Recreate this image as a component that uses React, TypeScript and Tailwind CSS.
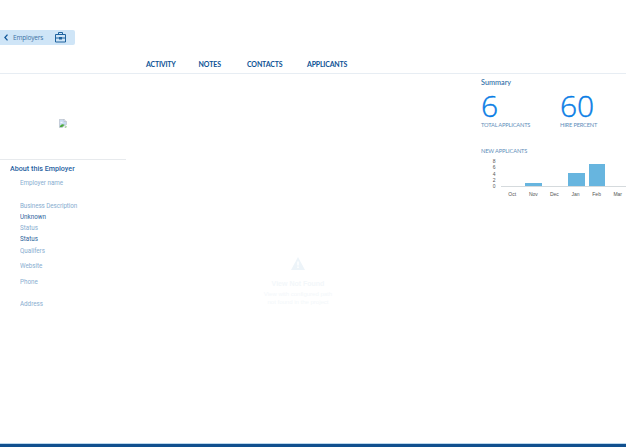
import React from "react";

const tabs = [
  { label: "ACTIVITY", cls: "w-[52.5px] tracking-[-0.2px]" },
  { label: "NOTES", cls: "w-[48.5px] tracking-[-0.1px]" },
  { label: "CONTACTS", cls: "w-[60px] tracking-[-0.15px]" },
  { label: "APPLICANTS", cls: "w-[60px] tracking-[-0.2px]" },
];

const fields = [
  { label: "Employer name", cls: "h-[22.5px] text-[#88add0]" },
  { label: "Business Description", cls: "h-[11px] tracking-[-0.08px] text-[#88add0]" },
  { label: "Unknown", cls: "h-[11.5px] text-[#2c649b]" },
  { label: "Status", cls: "h-[11px] text-[#88add0]" },
  { label: "Status", cls: "h-[11.5px] text-[#2c649b]" },
  { label: "Qualifers", cls: "h-[15.5px] text-[#88add0]" },
  { label: "Website", cls: "h-[15.5px] text-[#88add0]" },
  { label: "Phone", cls: "h-[22.5px] text-[#88add0]" },
  { label: "Address", cls: "h-[12px] text-[#88add0]" },
];

const months = [
  { label: "Oct", bar: "h-0" },
  { label: "Nov", bar: "h-[3px]" },
  { label: "Dec", bar: "h-0" },
  { label: "Jan", bar: "h-[13px]" },
  { label: "Feb", bar: "h-[22px]" },
  { label: "Mar", bar: "h-0" },
];

function Briefcase() {
  return (
    <svg className="h-[11px] w-[11px]" viewBox="0 0 11 11" fill="none" stroke="#1f639f" strokeWidth="1">
      <path d="M3.5 2.5v-2h4v2M.5 2.5h10v7.5H.5zM.5 6h10" />
      <path d="M4 5h3v2.5H4z" fill="#1f639f" stroke="none" />
    </svg>
  );
}

function MissingImage() {
  return (
    <svg className="ml-[59px] h-[9px] w-[8px]" viewBox="0 0 8 9">
      <path d="M.4.4h4.8l2.2 2.2v3L3.2 8.5H.4z" fill="#cbdcf3" stroke="#adb4be" strokeWidth=".6" />
      <path d="M5.2.4v2.2h2.2" fill="#fff" stroke="#9da4ad" strokeWidth=".5" />
      <path d="M1.5 2.8h2v1h-2z" fill="#fff" />
      <path d="M.8 7.8C1.5 5.2 3.4 4.6 5.7 5.8L3.2 8H.8z" fill="#4ba83c" />
      <path d="M5.4 8.6l2-1.8v1.8z" fill="#61af52" />
    </svg>
  );
}

function Metric({ value, label, width }: { value: string; label: string; width: string }) {
  return (
    <div className={width}>
      <div className="h-[30px] font-['Open_Sans',sans-serif] text-[30px] leading-[30px] font-light text-[#087de5] [-webkit-text-stroke:0.4px_#087de5]">{value}</div>
      <div className="h-[8px] text-[5.7px] leading-[8px] tracking-[-0.17px] text-[#5f8fba]">{label}</div>
    </div>
  );
}

function Chart() {
  return (
    <div className="mt-[3px] flex h-[40px]">
      <div className="w-[16.5px] text-right font-['Liberation_Sans',sans-serif] text-[5px] text-[#555]">
        {[8, 6, 4, 2, 0].map((n) => (
          <div key={n} className="h-[6.3px] leading-[6.3px]">{n}</div>
        ))}
      </div>
      <div className="ml-[5.5px] w-[128px] shrink-0">
        <div className="flex h-[29px] items-end border-b border-[#d5dadd] pl-[1px]">
          {months.map((m) => (
            <div key={m.label} className="flex w-[21.2px] shrink-0 justify-center">
              <div className={`bg-[#67b5df] ${m.label === "Feb" ? "w-[16px]" : "w-[17px]"} ${m.bar}`} />
            </div>
          ))}
        </div>
        <div className="flex pt-[4px] pl-[0.7px] font-['Liberation_Sans',sans-serif] text-[5px] leading-[7px] text-[#555]">
          {months.map((m) => (
            <div key={m.label} className="w-[21.1px] shrink-0 text-center">{m.label}</div>
          ))}
        </div>
      </div>
    </div>
  );
}

export default function App() {
  return (
    <div className="flex h-[447px] w-[626px] flex-col overflow-hidden bg-white font-[Lato,sans-serif] whitespace-nowrap">
      <header className="h-[74px] shrink-0 border-b border-[#e7edf3] pt-[30px]">
        <button className="flex h-[15px] w-[75px] items-center rounded-r-[2px] bg-[#cfe5f7]">
          <svg className="ml-[4px] h-[7px] w-[4px]" viewBox="0 0 4 7" fill="none" stroke="#14599a" strokeWidth="1.3">
            <path d="M3.5.6L.9 3.5l2.6 2.9" />
          </svg>
          <span className="ml-[5px] w-[42px] pt-px text-left font-['Open_Sans',sans-serif] text-[6.5px] leading-[14px] tracking-[-0.18px] text-[#3b72a6]">Employers</span>
          <Briefcase />
        </button>
        <nav className="mt-[13px] flex pl-[146px] text-[7px] leading-[12px] font-bold text-[#0d5295]">
          {tabs.map((t) => (
            <div key={t.label} className={t.cls}>{t.label}</div>
          ))}
        </nav>
      </header>
      <div className="flex min-h-0 flex-1">
        <aside className="w-[126px] shrink-0 font-[Roboto,sans-serif]">
          <div className="h-[86px] border-b border-[#e7eaed] pt-[45px]">
            <MissingImage />
          </div>
          <h2 className="mt-[3px] ml-[10px] h-[12px] origin-left scale-x-[0.92] text-[7.8px] leading-[12px] font-medium text-[#1f619f]">About this Employer</h2>
          <div className="mt-[2px] ml-[20px] origin-left scale-x-[0.87] text-[7.2px] leading-[11px]">
            {fields.map((f, i) => (
              <div key={i} className={f.cls}>{f.label}</div>
            ))}
          </div>
        </aside>
        <main className="flex flex-1 flex-col items-center pt-[183px] pr-[11px] font-['Liberation_Sans',sans-serif] text-[#f3f7fa]">
          <svg className="h-[13px] w-[14px]" viewBox="0 0 14 13">
            <path d="M7 0l7 13H0z" fill="#edf4f9" />
            <path d="M6.3 4.5h1.4v4H6.3zm0 5h1.4V11H6.3z" fill="#fff" />
          </svg>
          <div className="mt-[8px] text-[7px] leading-[12px] font-bold">View Not Found</div>
          <div className="text-center text-[6px] leading-[8px]">View with configured path<br />not found in the project</div>
        </main>
        <section className="mr-[-3px] w-[148px] shrink-0 pl-[3px]">
          <div className="-ml-[3px] pt-[3px]">
            <h2 className="h-[12px] text-[7.3px] leading-[12px] font-medium text-[#2a6ba5]">Summary</h2>
            <div className="mt-[2px] flex">
              <Metric value="6" label="TOTAL APPLICANTS" width="w-[79px]" />
              <Metric value="60" label="HIRE PERCENT" width="w-[60px]" />
            </div>
            <h3 className="mt-[18px] h-[8px] text-[5.7px] leading-[8px] tracking-[-0.15px] text-[#5f8fba]">NEW APPLICANTS</h3>
          </div>
          <Chart />
        </section>
      </div>
      <footer className="h-[4px] shrink-0 border-t border-[#bad7ed] bg-[#11508f]" />
    </div>
  );
}
